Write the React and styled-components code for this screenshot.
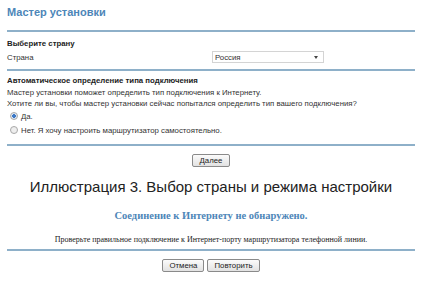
import React from 'react'
import styled, { createGlobalStyle } from 'styled-components'

const GlobalStyle = createGlobalStyle`
    html, body {
        margin: 0;
        padding: 0;
        background: #fff;
    }
    body {
        font-family: "Liberation Sans", Arial, sans-serif;
        color: #333;
    }
`

const Page = styled.div`
    width: 424px;
    height: 282px;
    overflow: hidden;
    padding: 0 9px 0 7px;
    box-sizing: border-box;
`

const Title = styled.div`
    padding-top: 5px;
    height: 30px;
    box-sizing: border-box;
    font-size: 11px;
    line-height: 14px;
    font-weight: bold;
    color: #4d86b8;
`

const Rule = styled.div`
    height: 2px;
    background: #8eb0c9;
    margin: ${p => p.$m || '0'};
`

const Section = styled.div`
    padding: ${p => p.$pad || '0'};
    font-size: 7.8px;
    color: #333;
`

const Heading = styled.div`
    font-weight: bold;
    color: #222;
    line-height: 12px;
`

const Text = styled.div`
    line-height: 11px;
`

const FieldRow = styled.div`
    display: grid;
    grid-template-columns: 205px 112px;
    align-items: center;
    height: 14px;
`

const SelectBox = styled.div`
    height: 10px;
    border: 1px solid #d4d4d4;
    display: flex;
    align-items: center;
    justify-content: space-between;
    padding: 0 5px 0 2px;
    font-size: 7.8px;
    color: #333;
`

const Caret = styled.span`
    width: 0;
    height: 0;
    border-left: 2px solid transparent;
    border-right: 2px solid transparent;
    border-top: 3px solid #444;
`

const RadioRow = styled.label`
    display: flex;
    align-items: center;
    gap: 3px;
    height: 14px;
    padding-left: 3px;
`

const Radio = styled.span`
    width: 6px;
    height: 6px;
    border-radius: 50%;
    border: 1px solid #a9a9a9;
    background: ${p => p.$on ? 'radial-gradient(circle, #3c78c6 0 1.6px, #dbe6f3 2px)' : '#eee'};
`

const Center = styled.div`
    display: flex;
    justify-content: center;
    gap: ${p => p.$gap || '0'};
    padding: ${p => p.$pad || '0'};
`

const Button = styled.button`
    height: 13px;
    min-width: ${p => p.$w || '0'};
    padding: 0 6px;
    margin: 0;
    border: 1px solid #8a8a8a;
    border-radius: 2px;
    background: linear-gradient(#fbfbfb, #e2e2e2);
    font-family: "Liberation Sans", Arial, sans-serif;
    font-size: 7.8px;
    color: #222;
    line-height: 11px;
`

const Caption = styled.div`
    text-align: center;
    font-size: 15px;
    color: #222;
    padding: 11px 0 0 0;
    line-height: 18px;
`

const Notice = styled.div`
    text-align: center;
    font-family: "Liberation Serif", "Times New Roman", serif;
    font-weight: bold;
    font-size: 10.5px;
    color: #4d86b8;
    padding-top: 13px;
    line-height: 14px;
`

const Hint = styled.div`
    text-align: center;
    font-family: "Liberation Serif", "Times New Roman", serif;
    font-size: 8px;
    color: #222;
    padding-top: 12px;
    line-height: 9px;
`

function App() {
    return (
        <>
            <GlobalStyle />
            <Page>
                <Title>Мастер установки</Title>
                <Rule />
                <Section $pad="6px 0 5px 0">
                    <Heading>Выберите страну</Heading>
                    <FieldRow>
                        <span>Страна</span>
                        <SelectBox>
                            <span>Россия</span>
                            <Caret />
                        </SelectBox>
                    </FieldRow>
                </Section>
                <Rule />
                <Section $pad="4px 0 7px 0">
                    <Heading>Автоматическое определение типа подключения</Heading>
                    <Text>Мастер установки поможет определить тип подключения к Интернету.</Text>
                    <Text>Хотите ли вы, чтобы мастер установки сейчас попытался определить тип вашего подключения?</Text>
                    <RadioRow><Radio $on />Да.</RadioRow>
                    <RadioRow><Radio />Нет. Я хочу настроить маршрутизатор самостоятельно.</RadioRow>
                </Section>
                <Rule />
                <Center $pad="8px 0 0 0">
                    <Button $w="38px">Далее</Button>
                </Center>
                <Caption>Иллюстрация 3. Выбор страны и режима настройки</Caption>
                <Notice>Соединение к Интернету не обнаружено.</Notice>
                <Hint>Проверьте правильное подключение к Интернет-порту маршрутизатора телефонной линии.</Hint>
                <Rule $m="5px 0 0 0" />
                <Center $gap="3px" $pad="8px 0 0 0">
                    <Button>Отмена</Button>
                    <Button>Повторить</Button>
                </Center>
            </Page>
        </>
    )
}

export default App
